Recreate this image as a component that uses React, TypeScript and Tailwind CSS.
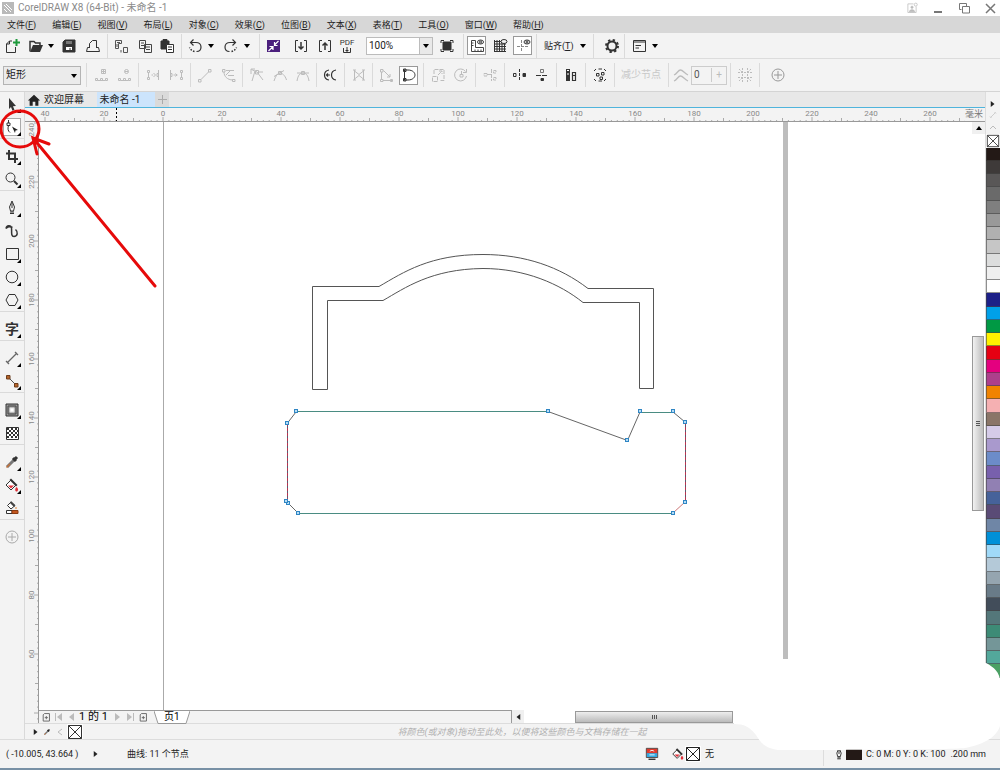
import type { ReactNode } from "react";
import clsx from "clsx";

const menus = [
  ["文件", "F"],
  ["编辑", "E"],
  ["视图", "V"],
  ["布局", "L"],
  ["对象", "C"],
  ["效果", "C"],
  ["位图", "B"],
  ["文本", "X"],
  ["表格", "T"],
  ["工具", "O"],
  ["窗口", "W"],
  ["帮助", "H"],
];

const swatches = [
  "#231916", "#3e3a39", "#595757", "#6a6a6a", "#7f7f7f", "#999999", "#b0b0b0", "#c6c6c6",
  "#dcdddd", "#efefef", "#ffffff", "#1d2088", "#00a0e9", "#009944", "#fff100", "#e60012",
  "#e4007f", "#ad3f8c", "#f08300", "#f5b0b2", "#8a7568", "#d5cbe8", "#a999cd", "#6c8cc9",
  "#7860ad", "#9180b3", "#46629a", "#5a4b76", "#6f86a6", "#0090d8", "#a0d9f8", "#b4c9d8",
  "#95a5b0", "#697b88", "#424d5a", "#54777a", "#3d8b76", "#749698", "#53a89b", "#4ba064",
];

const icons: Record<string, ReactNode> = {
  new: (
    <>
      <path d="M8 3H5.500L2.500 6V14.500H11.500V9M5.500 3V6H2.500" />
      <path d="M12.500 1V8M9 4.500H16" stroke="#1f9a3c" strokeWidth="2" />
    </>
  ),
  open: (
    <>
      <path d="M2 13.500V3.500H6L7.500 5H12V7" strokeWidth="1.500" />
      <path d="M2 14L5 7H15L12 14Z" fill="#333" stroke="none" />
    </>
  ),
  save: (
    <>
      <path d="M2 4L4 2H14V14H2Z" fill="#333" />
      <path d="M5 3H11V6H5Z" fill="#777" stroke="none" />
      <path d="M5 9H11V12H5Z" fill="#fff" stroke="none" />
      <path d="M9 10V12" />
    </>
  ),
  print: <path d="M4.500 10V5.500L7.500 2.500H11.500V10M4.500 9.500H2.500L1.500 13.500H14.500L13.500 9.500H11.500" />,
  cut: (
    <>
      <path d="M2.500 2.500H8.500V5.500H5.500V10.500H2.500ZM4 4.500H7M4 6V9" stroke="#555" />
      <path d="M10.500 9.500H14.500V14.500H10.500ZM8 12V14.500" stroke="#555" />
    </>
  ),
  copy: <path d="M2.500 2.500H8.500V10.500H2.500ZM4 5H7M4 7.500H7M7.500 6.500H14.500V14.500H7.500ZM9 9H13M9 11.500H13" stroke="#444" />,
  paste: (
    <>
      <path d="M2 3H10V11H2ZM4 1.500H8V3H4Z" fill="#333" />
      <path d="M7.500 6.500H14.500V14.500H7.500Z" fill="#fff" />
      <path d="M9 9H13M9 11.500H13" />
    </>
  ),
  undo: (
    <>
      <path d="M6.500 1.500L3.500 4.500L6.500 7.500M4 4.500H9C12 4.500 14 6.500 14 9S12.500 13.500 9.500 13.500" strokeWidth="1.200" />
      <path d="M7.500 13.500C5 13 3.500 11.500 2.500 9.500" strokeWidth="1.500" strokeDasharray="1.500 1.500" />
    </>
  ),
  redo: (
    <>
      <path d="M9.500 1.500L12.500 4.500L9.500 7.500M12 4.500H7C4 4.500 2 6.500 2 9S3.500 13.500 6.500 13.500" strokeWidth="1.200" />
      <path d="M8.500 13.500C11 13 12.500 11.500 13.500 9.500" strokeWidth="1.500" strokeDasharray="1.500 1.500" />
    </>
  ),
  search: (
    <>
      <path d="M2 2H15V14H2Z" fill="#4b1f7d" stroke="none" />
      <path d="M13.500 3L9.500 7M9.500 4V7.500H12.500M3.500 13L7.500 9M4.500 8.500H8V12" stroke="#fff" strokeWidth="1.200" />
    </>
  ),
  importFile: (
    <>
      <path d="M5 2.500H2.500V13.500H5M11 2.500H13.500V13.500H11" />
      <path d="M8 4V11M5.500 8.500L8 11L10.500 8.500" strokeWidth="1.500" />
    </>
  ),
  exportFile: (
    <>
      <path d="M5 2.500H2.500V13.500H5M11 2.500H13.500V13.500H11" />
      <path d="M8 12V5M5.500 7.500L8 5L10.500 7.500" strokeWidth="1.500" />
    </>
  ),
  full: (
    <>
      <path d="M4 4H12V12H4Z" fill="#333" />
      <path d="M2 5V2.500H5M11 2.500H14V5M14 11V13.500H11M5 13.500H2V11" />
    </>
  ),
  rulers: (
    <>
      <path d="M2.500 2.500H6.500V9.500H14.500V13.500H2.500ZM2.500 5H4.500M2.500 7.500H4.500M6 13.500V11.500M9 13.500V11.500M12 13.500V11.500" stroke="#444" />
      <ellipse cx="11.500" cy="4" rx="3" ry="2" />
      <circle cx="11.500" cy="4" r="1" />
    </>
  ),
  grid: (
    <>
      <path d="M2 3.500H14M2 6H14M2 8.500H14M2 11H14M2 13.500H14M2.500 2V14M5 2V14M7.500 2V14M10 5V14M12.500 5V14" stroke="#333" />
      <ellipse cx="12" cy="3.500" rx="3" ry="2" fill="#f3f3f3" />
    </>
  ),
  guides: (
    <>
      <path d="M6.500 2V14M2 8.500H14" stroke="#888" strokeDasharray="3 1" />
      <ellipse cx="12" cy="4" rx="3" ry="2" />
      <circle cx="12" cy="4" r="1" />
    </>
  ),
  gear: (
    <>
      <circle cx="8" cy="8" r="4.500" strokeWidth="2" />
      <circle cx="8" cy="8" r="6" strokeWidth="2" strokeDasharray="2.300 2.412" />
    </>
  ),
  launch: <path d="M2.500 2.500H14.500V13.500H2.500ZM2.500 4H14.500M4.500 7.500H10M4.500 10H8" />,
  nodeAdd: <path d="M8.500 2.500H12.500V6.500H8.500ZM8.500 4.500H12.500M10.500 2.500V6.500M2.500 11.500H4.500V13.500H2.500ZM7.500 11.500H9.500V13.500H7.500ZM12.500 11.500H14.500V13.500H12.500ZM4.500 13.500H12.500" />,
  nodeDel: <path d="M8.500 4.500A2 2 0 1 0 12.500 4.500A2 2 0 1 0 8.500 4.500ZM9 4.500H12M2.500 11.500H4.500V13.500H2.500ZM7.500 11.500H9.500V13.500H7.500ZM12.500 11.500H14.500V13.500H12.500ZM4.500 13.500H12.500" />,
  join: <path d="M2.500 3.500H4.500V5.500H2.500ZM2.500 10.500H4.500V12.500H2.500ZM3.500 5.500V10M6.500 8H8M13.500 3V13M8.500 6L10.500 8L8.500 10M13.500 6.500H12V9.500H13.500" />,
  breakCurve: <path d="M2.500 3V13M2.500 6.500H4V9.500H2.500M9.500 8H5.500M7.500 6.500L9 8L7.500 9.500M12.500 3.500H14.500V5.500H12.500ZM12.500 10.500H14.500V12.500H12.500ZM13.500 5.500V10.500" />,
  toLine: <path d="M1.500 12.500H4V15H1.500ZM11.500 2.500H14V5H11.500ZM4 12.500L11.500 5" />,
  toCurve: <path d="M2.500 2.500H5V5H2.500ZM4 5C4 9 7 13 13 13M6 3.500H14M8 8.500H14M12.500 12.500H15V14.500H12.500ZM10 4L6 8" />,
  cusp: <path d="M2.500 2.500L8 5L14 13M6 4L3 14M6.500 3.500H9.500V7H6.500ZM9 5H14M2 7V2H6" />,
  smooth: <path d="M2 14C4 8 6 6 8 6S13 8 14.500 13M2 9.500L12 3.500M6.500 4.500H9.500V7.500H6.500Z" />,
  symm: <path d="M2 14C3 8 5 6 8 6S13 8 14 14M2 6H14M6.500 4.500H9.500V7.500H6.500Z" />,
  reverse: <path d="M7 3C1 4 1 12 7 13M14 3C8 4 8 12 14 13M4 8H8M6 6.500L4.500 8L6 9.500" strokeWidth="1.200" />,
  extend: <path d="M3.500 3V13M12.500 3V13M3.500 4L8 7.500L12.500 4M3.500 12L8 8.500L12.500 12M2 3H5M2 13H5M11 3H14M11 13H14" />,
  extract: <path d="M2.500 2.500H5V5H2.500ZM3.500 5V12M2.500 12.500H5V14.500H2.500ZM5 13.500H14M5.500 3.500L12 10M9 10H12V7M12.500 12.500H14.500V14.500H12.500Z" />,
  close: <path d="M3.500 2.500V13.500M3.500 3H7C12 3 14 6 14 8S12 13 7 13H3.500M2.500 2H5V4.500H2.500ZM2.500 11.500H5V14H2.500Z" />,
  stretch: <path d="M2.500 9.500H7.500V14.500H2.500ZM4 7V2.500H14V13.500H10M8 8L12 4M9 4H12V7" strokeDasharray="4 1" />,
  rotate: <path d="M12.500 4.500A6 6 0 1 0 13.500 9M13.500 2V5.500H10M7 7.500H10V10H7ZM8.500 4V7" />,
  align: <path d="M9.500 2V14M2 6.500H5V9H2ZM5 7.500H9.500M11.500 3.500H14V6H11.500ZM11.500 10.500H14V13H11.500Z" strokeDasharray="4 1" />,
  flipH: (
    <>
      <path d="M8.500 2V14" strokeDasharray="3 1" />
      <path d="M2.500 6.500H5V9.500H2.500Z" />
      <path d="M12 6.500H14.500V9.500H12Z" fill="#333" />
    </>
  ),
  flipV: (
    <>
      <path d="M2 8.500H14" strokeDasharray="5 1" />
      <path d="M6.500 2.500H9.500V5.500H6.500Z" stroke="#777" />
      <path d="M7 11.500H9.500V13.500H7Z" fill="#333" />
    </>
  ),
  elastic: (
    <>
      <path d="M3 2H7V14H3Z" fill="#333" stroke="none" />
      <path d="M4 3.500H6M4 7H6" stroke="#fff" />
      <path d="M9.500 5.500H12.500V13.500H9.500ZM9.500 8.500H12.500" strokeWidth="1.200" />
    </>
  ),
  selectAll: <path d="M2 4L4 2M12 2L14 4M2 12L4 14M14 12L12 14M6.500 2H10M6.500 14H10M4.500 6.500H7V9H4.500ZM9.500 5.500H12V8H9.500ZM8 10H10.500V12.500H8Z" />,
  curveSmooth: <path d="M1 8C4 7 5 3 7.500 3S11 6 15 8M1 14C4 13 5 9 7.500 9S11 12 15 14" strokeWidth="1.300" />,
  box: <path d="M5.500 1V15M10.500 1V15M1 5.500H15M1 10.500H15M2 2L5 5M14 2L11 5M2 14L5 11M14 14L11 11" strokeDasharray="2 1" />,
  plus: (
    <>
      <circle cx="8" cy="8" r="6" />
      <path d="M8 4V12M4 8H12" />
    </>
  ),
  pick: <path d="M5 2L12 10L9 10.200L10.500 14L8.500 14.700L7 11L5 13Z" fill="#333" stroke="none" />,
  shape: (
    <>
      <path d="M4.500 1V4M3 4H6V6.500H3ZM4.500 6.500C3.500 10 4 12 6 13.500" />
      <path d="M8 7.500L14 11L11.500 11.500L11 14Z" fill="#222" stroke="none" />
    </>
  ),
  crop: <path d="M5 2V11H14M2 5.500H11V15" strokeWidth="2" />,
  zoom: (
    <>
      <circle cx="6.500" cy="6.500" r="4.500" />
      <path d="M10 10L13.500 13.500" strokeWidth="2" />
    </>
  ),
  pen: <path d="M8 1L5.500 7L6.500 11H9.500L10.500 7ZM8 3V8M6 13.500H10M7 11V13M9 11V13" />,
  artistic: <path d="M2 5.500C2.500 2 7 2 7.500 5S6.500 13.500 10 13.500S14.500 9 11.500 6.500M2 5.500C4 3.500 6.500 3.500 8.500 4.500" strokeWidth="1.500" />,
  rect: <path d="M2.500 2.500H14.500V13.500H2.500Z" />,
  ellipse: <circle cx="8" cy="8" r="5.800" />,
  polygon: <path d="M5 2.500H11L14 8L11 13.500H5L2 8Z" />,
  dimension: <path d="M3 13L13 3M2 11L5 14M11 2L14 5" stroke="#666" strokeWidth="1.300" />,
  connector: (
    <>
      <path d="M4 4L12 12" stroke="#555" />
      <path d="M2.500 2.500H6V6H2.500ZM10.500 10.500H14V14H10.500Z" fill="#b5652a" stroke="#6d3c1c" />
    </>
  ),
  shadow: (
    <>
      <path d="M2 2H14V14H2Z" fill="#999" />
      <path d="M4 4H12V12H4Z" stroke="#444" />
      <path d="M6 6H10V10H6Z" fill="#fff" stroke="#ddd" />
    </>
  ),
  transparency: (
    <>
      <path d="M2.500 2.500H14.500V14.500H2.500Z" fill="#fff" />
      <path d="M3 4H14M3 8H14M3 12H14" strokeWidth="2" strokeDasharray="2 2" />
      <path d="M5 6H14M5 10H14" strokeWidth="2" strokeDasharray="2 2" />
    </>
  ),
  eyedropper: (
    <>
      <path d="M3 13L10 6" stroke="#777" strokeWidth="3" />
      <path d="M2.500 13.500L6 10" stroke="#c5723a" strokeWidth="1.500" />
      <path d="M9 4L12 7M10 6L13 3" strokeWidth="3" />
    </>
  ),
  fill: (
    <>
      <path d="M7 3L2 8L7 13L12 8Z" fill="#fff" />
      <path d="M7 1.500L13.500 8L12 9.500L5.500 3Z" fill="#333" stroke="none" />
      <path d="M4 8.500H10L7 11.500Z" fill="#e0313a" stroke="none" />
      <path d="M12.500 10C15 12 14 14.500 12.500 14.500S10.500 12 12.500 10Z" fill="#e0313a" stroke="none" />
    </>
  ),
  smartFill: (
    <>
      <path d="M7 2L3.500 5.500L7 9L11 5.500Z" fill="#fff" />
      <path d="M7 1L11.500 5.500L10 7L6 3Z" fill="#444" stroke="none" />
      <path d="M12 7V9" stroke="#e08030" />
      <path d="M2.500 10.500H8V13.500H2.500Z" fill="#fff" />
      <path d="M8 10.500H14V13.500H8Z" fill="#c4571f" stroke="#8a3b12" />
    </>
  ),
  monitor: (
    <>
      <path d="M1.500 1.500H14.500V12H1.500Z" fill="#e0392c" stroke="#444" />
      <path d="M2 7H14V11.500H2Z" fill="#35a9e0" stroke="none" />
      <path d="M5.500 5C7 3.500 9 3.500 10.500 5M5 9H11" stroke="#fff" />
      <path d="M4 14H12" strokeWidth="1.500" />
    </>
  ),
  none: <path d="M1.500 1.500H14.500V14.500H1.500ZM1.500 1.500L14.500 14.500M14.500 1.500L1.500 14.500" />,
  user: (
    <>
      <path d="M10 2.500H2.500V14H13.500V6" />
      <path d="M4.500 13C4.500 9.500 11.500 9.500 11.500 13Z" fill="currentColor" />
      <circle cx="8" cy="7" r="1.500" fill="currentColor" />
      <circle cx="13" cy="3.500" r="2" />
    </>
  ),
  home: <path d="M1 8.500L8 2L15 8.500H13V14.500H9.500V10H6.500V14.500H3V8.500Z" fill="#222" stroke="none" />,
  pageAdd: <path d="M5.500 2.500H13.500V14.500H3.500V4.500ZM6 9H11M8.500 6.500V11.500" stroke="#666" strokeWidth="1.500" />,
};

function Icon({ name, className = "size-4" }: { name: string; className?: string }) {
  return (
    <svg viewBox="0 0 16 16" fill="none" stroke="currentColor" className={clsx("shrink-0", className)} aria-hidden="true">
      {icons[name]}
    </svg>
  );
}

function Caret({ className }: { className?: string }) {
  return (
    <svg viewBox="0 0 6 4" className={clsx("h-1 w-1.5 shrink-0 fill-black", className)} aria-hidden="true">
      <path d="M0 0H6L3 4Z" />
    </svg>
  );
}

function Triangle({ className = "size-2", left, bar }: { className?: string; left?: boolean; bar?: boolean }) {
  return (
    <svg viewBox="0 0 8 8" className={clsx("shrink-0", left && "rotate-180", className)} aria-hidden="true">
      <path d="M1 0L6 4L1 8Z" fill="currentColor" />
      {bar && <path d="M7.500 0V8" stroke="currentColor" />}
    </svg>
  );
}

function Tool({ icon, label, width = "w-[23px]", active, muted }: { icon: string; label: string; width?: string; active?: boolean; muted?: boolean }) {
  return (
    <button aria-label={label} className={clsx("flex h-5 shrink-0 items-center justify-center", width, muted ? "text-[#bcbcbc]" : "text-[#333]")}>
      <span className={clsx("flex size-[19px] shrink-0 items-center justify-center", active && "border border-[#999] bg-white")}>
        <Icon name={icon} />
      </span>
    </button>
  );
}

function DropButton({ label, width = "w-4" }: { label: string; width?: string }) {
  return (
    <button aria-label={label} className={clsx("flex h-5 shrink-0 items-center justify-center", width)}>
      <Caret />
    </button>
  );
}

function Sep({ width = "w-1.5" }: { width?: string }) {
  return (
    <span className={clsx("flex h-6 shrink-0 justify-center", width)}>
      <span className="w-px bg-[#dadada]" />
    </span>
  );
}

function TitleBar() {
  return (
    <header className="flex h-4 items-center bg-white pr-1 pl-0.5 text-[#8a8a8a]">
      <svg viewBox="0 0 12 12" className="mr-1 size-3" aria-hidden="true">
        <path d="M0 0H12V12H0Z" fill="#b9b9b9" />
        <path d="M2 3L9 10M4 2L10 8M2 7L5 10" stroke="#fff" />
      </svg>
      <h1>CorelDRAW X8 (64-Bit) - 未命名 -1</h1>
      <div className="ml-auto flex items-center gap-3.5 text-[#777]">
        <button aria-label="账户" className="text-[#bbb]">
          <Icon name="user" className="size-3" />
        </button>
        <button aria-label="最小化">
          <svg viewBox="0 0 12 12" className="size-3"><path d="M2 10H10" stroke="currentColor" strokeWidth="2" /></svg>
        </button>
        <button aria-label="还原">
          <svg viewBox="0 0 12 12" className="size-3" fill="none" stroke="currentColor"><path d="M3.500 7.500H1.500V1.500H8.500V4M4.500 4.500H11.500V11H4.500Z" /></svg>
        </button>
        <button aria-label="关闭">
          <svg viewBox="0 0 12 12" className="size-3"><path d="M2 2L11 11M11 2L2 11" stroke="currentColor" strokeWidth="1.500" /></svg>
        </button>
      </div>
    </header>
  );
}

function MenuBar() {
  return (
    <nav className="flex h-[17px] items-center gap-4 bg-[#d7d7d7] px-[7px] text-[9px]">
      {menus.map(([name, key]) => (
        <button key={name}>
          {name}(<u>{key}</u>)
        </button>
      ))}
    </nav>
  );
}

function StandardBar() {
  return (
    <div className="flex h-[26px] items-center border-b border-[#dcdcdc]">
      <Tool icon="new" label="新建" width="w-6" />
      <Tool icon="open" label="打开" />
      <DropButton label="最近打开" width="w-2" />
      <Tool icon="save" label="保存" width="w-7" />
      <Tool icon="print" label="打印" width="w-5" />
      <Sep width="w-2" />
      <Tool icon="cut" label="剪切" width="w-5" />
      <Tool icon="copy" label="复制" width="w-7" />
      <Tool icon="paste" label="粘贴" width="w-4" />
      <Sep width="w-3" />
      <Tool icon="undo" label="撤消" width="w-4" />
      <DropButton label="撤消列表" />
      <Tool icon="redo" label="重做" width="w-6" />
      <DropButton label="重做列表" width="w-2" />
      <Sep width="w-4" />
      <Tool icon="search" label="搜索内容" width="w-3" />
      <span className="w-2.5" />
      <Tool icon="importFile" label="导入" width="w-6" />
      <Tool icon="exportFile" label="导出" />
      <button aria-label="发布为 PDF" className="flex w-[22px] shrink-0 flex-col items-center text-[#333]">
        <span className="text-[8px] leading-[8px]">PDF</span>
        <svg viewBox="0 0 8 6" className="h-1.5 w-2" fill="none" stroke="currentColor" aria-hidden="true">
          <path d="M.5 1V5.500H7.500V1M2.500 3.500H5.500M4 0V5" />
        </svg>
      </button>
      <span className="relative ml-2 flex h-[18px] w-[67px] shrink-0 border border-[#bcbcbc] bg-white">
        <select aria-label="缩放级别" className="w-full appearance-none pl-0.5 outline-none">
          <option>100%</option>
        </select>
        <span className="pointer-events-none absolute inset-y-0 right-0 flex w-[13px] items-center justify-center border-l border-[#bcbcbc] bg-[#e9e9e9]">
          <Caret />
        </span>
      </span>
      <Tool icon="full" label="全屏预览" width="w-7" />
      <Sep width="w-1" />
      <Tool icon="rulers" label="显示标尺" active />
      <Tool icon="grid" label="显示网格" />
      <Tool icon="guides" label="显示辅助线" active />
      <Sep width="w-1" />
      <button className="ml-1.5 flex items-center gap-1.5">
        <span className="text-[9px]">贴齐(<u>T</u>)</span>
        <Caret />
      </button>
      <Sep width="w-4" />
      <Tool icon="gear" label="选项" width="w-5" />
      <Sep />
      <Tool icon="launch" label="应用程序启动器" />
      <DropButton label="启动器列表" width="w-2" />
    </div>
  );
}

function PropertyBar() {
  return (
    <div className="flex h-[33px] items-center border-b border-[#d4d4d4] pl-[3px]">
      <span className="relative flex h-[19px] w-[78px] shrink-0 border border-[#b4b4b4] bg-[#ebebeb]">
        <select aria-label="选取范围模式" className="w-full appearance-none pl-0.5 outline-none">
          <option>矩形</option>
        </select>
        <Caret className="pointer-events-none absolute top-[7px] right-[3px]" />
      </span>
      <span className="w-0.5" />
      <Sep />
      <Tool icon="nodeAdd" label="添加节点" muted />
      <Tool icon="nodeDel" label="删除节点" muted />
      <Sep />
      <Tool icon="join" label="连接两个节点" muted />
      <Tool icon="breakCurve" label="断开曲线" muted />
      <Sep />
      <Tool icon="toLine" label="转换为线条" muted />
      <Tool icon="toCurve" label="转换为曲线" muted />
      <Sep />
      <Tool icon="cusp" label="尖突节点" muted />
      <Tool icon="smooth" label="平滑节点" muted />
      <Tool icon="symm" label="对称节点" muted />
      <Sep width="w-1" />
      <Tool icon="reverse" label="反转方向" />
      <Sep />
      <Tool icon="extend" label="延长曲线使之闭合" muted />
      <Sep width="w-1" />
      <Tool icon="extract" label="提取子路径" muted />
      <Tool icon="close" label="闭合曲线" active />
      <Sep />
      <Tool icon="stretch" label="延展与缩放节点" muted />
      <Tool icon="rotate" label="旋转与倾斜节点" muted />
      <Sep />
      <Tool icon="align" label="对齐节点" muted />
      <Sep />
      <Tool icon="flipH" label="水平反射节点" />
      <Tool icon="flipV" label="垂直反射节点" />
      <Sep />
      <Tool icon="elastic" label="弹性模式" />
      <Sep />
      <Tool icon="selectAll" label="选择所有节点" />
      <Sep />
      <button className="px-1 text-[#c8c8c8]">减少节点</button>
      <Sep />
      <Tool icon="curveSmooth" label="曲线平滑度" width="w-5" muted />
      <span className="flex h-[19px] w-9 shrink-0 items-center border border-[#ccc] text-[#555]">
        <input aria-label="平滑度" defaultValue="0" className="w-5 min-w-0 border-r border-[#ccc] pl-0.5 outline-none" />
        <span className="flex-1 text-center text-[#bbb]">+</span>
      </span>
      <Sep />
      <Tool icon="box" label="边框" muted />
      <Sep />
      <button aria-label="自定义" className="ml-1.5 flex size-5 items-center justify-center text-[#999]">
        <Icon name="plus" />
      </button>
    </div>
  );
}

const toolGroups = [
  [["pick", "选择"], ["shape", "形状"]],
  [["crop", "裁剪"], ["zoom", "缩放"]],
  [["pen", "手绘"], ["artistic", "艺术笔"], ["rect", "矩形"], ["ellipse", "椭圆形"], ["polygon", "多边形"]],
  [["text", "文本"]],
  [["dimension", "平行度量"], ["connector", "连接器"]],
  [["shadow", "阴影"], ["transparency", "透明度"]],
  [["eyedropper", "颜色滴管"], ["fill", "交互式填充"], ["smartFill", "智能填充"]],
];
const noFlyout = ["artistic", "transparency", "smartFill"];

function Toolbox() {
  return (
    <aside className="flex w-[25px] shrink-0 flex-col border-r border-[#d9d9d9]">
      {toolGroups.map((group, i) => (
        <div key={i} className="mb-[5px] border-b border-[#dadada]">
          {group.map(([icon, label]) => (
            <button key={icon} aria-label={`${label}工具`} className="relative flex h-[23px] w-full items-center justify-center text-[#333]">
              {icon === "text" ? (
                <span className="text-[14px] leading-4 font-bold">字</span>
              ) : (
                <span className={clsx("flex size-[18px] items-center justify-center", icon === "shape" && "border border-[#aaa] bg-white")}>
                  <Icon name={icon} />
                </span>
              )}
              {!noFlyout.includes(icon) && (
                <svg viewBox="0 0 4 4" className="absolute right-[3px] bottom-0.5 size-1 fill-black" aria-hidden="true">
                  <path d="M4 0V4H0Z" />
                </svg>
              )}
            </button>
          ))}
        </div>
      ))}
      <button aria-label="自定义工具箱" className="flex h-6 items-center justify-center text-[#aaa]">
        <Icon name="plus" />
      </button>
    </aside>
  );
}

// 59px on screen for every 20mm on the rulers
const STEP = 59;

function RulerX() {
  const labels = Array.from({ length: 30 }, (_, i) => i - 2);
  return (
    <div className="flex h-3.5 border-b border-[#999]">
      <svg className="h-[13px] min-w-0 flex-1 text-[8px]" aria-hidden="true">
        {labels.map((n) => {
          const x = 138 + n * STEP;
          return (
            <g key={n}>
              {Array.from({ length: 10 }, (_, k) => (
                <path key={k} d={`M${x + k * 5.9} ${k === 0 ? 9 : k === 5 ? 10 : 12}V13`} stroke="#aaa" />
              ))}
              {n < 14 && <text x={x} y="8" textAnchor="middle" fill="#888">{Math.abs(n * 20)}</text>}
            </g>
          );
        })}
        <path d="M91.500 0V13" stroke="#000" strokeDasharray="2 2" />
      </svg>
      <span className="w-5 text-[9px] leading-[13px] text-[#777]">毫米</span>
    </div>
  );
}

function RulerY() {
  const labels = Array.from({ length: 20 }, (_, i) => i);
  return (
    <div className="relative w-3.5 shrink-0 overflow-hidden border-r border-[#999]">
      <svg className="absolute inset-0 h-full w-full text-[8px]" aria-hidden="true">
        {labels.map((n) => {
          const y = 1 + n * STEP;
          return (
            <g key={n}>
              {Array.from({ length: 10 }, (_, k) => (
                <path key={k} d={`M${k === 0 ? 9 : k === 5 ? 10 : 12} ${y + k * 5.9}H13`} stroke="#aaa" />
              ))}
              {n < 10 && <text x={-y} y="9" textAnchor={n === 0 ? "end" : "middle"} transform="rotate(-90)" fill="#888">{Math.abs(240 - n * 20)}</text>}
            </g>
          );
        })}
      </svg>
    </div>
  );
}

const nodes = [
  [257, 289], [509, 289], [588, 318], [601, 289], [634, 289], [646, 300],
  [646, 380], [634, 391], [259, 391], [249, 381], [248, 301], [247, 379],
];

function Drawing() {
  return (
    <svg className="h-full w-full" fill="none" aria-label="绘图页面">
      <path d="M124.500 0V2000" stroke="#aaa" />
      <path d="M744 0H749V538H744Z" fill="#bdbdbd" />
      <g stroke="#555">
        <path d="M273.500 267.500V164.500H340C365 150 391 132.500 444 132.500C486 132.500 521 145 549 166.500H614.500V266.500H600.500V180.500H544C521 162 486 146.500 444 146.500C392 147 366 166 344 178.500H288.500V267.500Z" />
        <path d="M257 289.500H509M601 290.500H634M259 391.500H634" stroke="#4a8c82" />
        <path d="M509 289.500L588.500 318.500L601 290M257 290L248.500 301M634 290L646 300M248 380L259 391" stroke="#666" />
        <path d="M634 391L646 380" stroke="#c77" />
        <path d="M248.500 301V380M646.500 300V380" stroke="#5a5a6e" />
        <path d="M248.500 301V380M646.500 300V380" stroke="#b8324f" strokeDasharray="3 2" />
      </g>
      {nodes.map(([x, y], i) => (
        <rect key={i} x={x - 1.5} y={y - 1.5} width="3" height="3" fill="#b5dcf5" stroke="#2f86c4" />
      ))}
    </svg>
  );
}

function PageNav() {
  return (
    <div className="flex h-[13px] items-center">
      <div className="flex h-full w-1/2 items-center border-t border-r border-[#999] bg-[#f3f3f3] text-[#bbb]">
        <button aria-label="在前面添加页" className="ml-0.5"><Icon name="pageAdd" className="size-2.5" /></button>
        <button aria-label="第一页" className="ml-1"><Triangle left bar /></button>
        <button aria-label="上一页" className="ml-1"><Triangle left /></button>
        <span className="mx-1 text-[11px] leading-3 text-black">1 的 1</span>
        <button aria-label="下一页" className="ml-0.5"><Triangle /></button>
        <button aria-label="最后一页" className="ml-1"><Triangle bar /></button>
        <button aria-label="在后面添加页" className="ml-1"><Icon name="pageAdd" className="size-2.5" /></button>
        <button className="relative ml-1.5 h-[13px] w-9 text-black">
          <svg viewBox="0 0 36 13" className="absolute inset-0 h-[13px] w-9" aria-hidden="true">
            <path d="M0 0L4 12.500H32L36 0" fill="#fff" stroke="#999" />
          </svg>
          <span className="relative block leading-[12px]">页1</span>
        </button>
      </div>
      <button aria-label="向左滚动" className="flex h-full w-3 items-center justify-center bg-[#f0f0f0]">
        <Triangle left className="size-1.5" />
      </button>
      <div className="ml-[51px] flex h-3 w-[158px] items-center justify-center gap-px border border-[#999] bg-gradient-to-b from-[#eee] to-[#bbb]">
        <i className="h-1 w-px bg-[#555]" />
        <i className="h-1 w-px bg-[#555]" />
        <i className="h-1 w-px bg-[#555]" />
      </div>
    </div>
  );
}

function DocumentPalette() {
  return (
    <div className="flex h-4 items-center border-t border-[#dcdcdc] pl-2">
      <Triangle className="size-1.5" />
      <button aria-label="滴管" className="ml-1"><Icon name="eyedropper" className="size-2" /></button>
      <svg viewBox="0 0 6 8" className="ml-1.5 h-2 w-1.5" fill="none" stroke="#bbb" aria-hidden="true"><path d="M5 1L1 4L5 7" /></svg>
      <button aria-label="无颜色" className="ml-1 bg-white text-[#333]"><Icon name="none" /></button>
      <p className="flex-1 pr-6 text-center text-[9px] text-[#b0b0b0] italic">将颜色(或对象)拖动至此处，以便将这些颜色与文档存储在一起</p>
    </div>
  );
}

function Workspace() {
  return (
    <main className="flex min-w-0 flex-1 flex-col">
      <div className="flex h-4 items-stretch border-b border-[#4fb4dc] bg-[#e8e8e8]">
        <button className="flex w-[72px] items-center gap-[3px] pl-0.5">
          <Icon name="home" className="size-3.5" />
          欢迎屏幕
        </button>
        <button className="w-[58px] bg-[#cce4fc] pr-3">未命名 -1</button>
        <button aria-label="新建文档" className="flex w-3.5 items-center justify-center bg-[#dadada]">
          <svg viewBox="0 0 9 9" className="size-[9px]" stroke="#aaa"><path d="M4.500 0V9M0 4.500H9" /></svg>
        </button>
      </div>
      <RulerX />
      <div className="flex flex-1">
        <RulerY />
        <div className="flex min-w-0 flex-1 flex-col bg-white">
          <div className="flex flex-1">
            <div className="relative min-w-0 flex-1">
              <div className="absolute inset-0"><Drawing /></div>
            </div>
            <div className="flex w-[13px] flex-col">
              <button aria-label="向上滚动" className="flex h-3 items-center justify-center bg-[#f0f0f0]">
                <Caret className="rotate-180" />
              </button>
              <div className="mt-[202px] flex h-[175px] w-3 flex-col items-center justify-center gap-px border border-[#999] bg-gradient-to-r from-[#f2f2f2] to-[#bdbdbd]">
                <i className="h-px w-1 bg-[#555]" />
                <i className="h-px w-1 bg-[#555]" />
                <i className="h-px w-1 bg-[#555]" />
              </div>
            </div>
          </div>
          <PageNav />
        </div>
      </div>
      <DocumentPalette />
    </main>
  );
}

function ColorPalette() {
  return (
    <aside className="flex w-[15px] shrink-0 flex-col items-center border-l border-[#ddd] pt-2">
      <span className="flex h-2 items-center"><Triangle className="size-1.5" /></span>
      <span className="flex h-3.5 items-center text-[#bbb]"><Icon name="dimension" className="size-2 opacity-40" /></span>
      <svg viewBox="0 0 8 12" className="h-3 w-2" fill="none" stroke="#bbb"><path d="M1 7L4 4L7 7" /></svg>
      <ul className="w-full [&>li:nth-child(4n+1)]:h-3.5">
        <li className="bg-white"><Icon name="none" className="size-3.5 text-[#333]" /></li>
        {swatches.map((color) => (
          <li key={color} className="h-[13px] border-b border-l border-[#44444499]" style={{ backgroundColor: color }} />
        ))}
      </ul>
    </aside>
  );
}

function StatusBar() {
  return (
    <footer className="flex h-[29px] items-center border-t border-[#dcdcdc] px-1.5 text-[9px]">
      <span className="w-[87px]">( -10.005, 43.664 )</span>
      <Triangle className="size-1.5" />
      <span className="ml-7">曲线: 11 个节点</span>
      <div className="ml-auto flex items-center">
        <Icon name="monitor" className="size-3.5" />
        <Icon name="fill" className="ml-3 size-3.5" />
        <span className="bg-white"><Icon name="none" /></span>
        <span className="ml-1 w-[118px]">无</span>
        <span className="h-6 w-px bg-[#ddd]" />
        <Icon name="pen" className="ml-2 size-3.5" />
        <span className="h-3 w-4 bg-[#231916]" />
        <span className="ml-1 w-[84px] whitespace-nowrap">C: 0 M: 0 Y: 0 K: 100</span>
        <span className="w-9 text-right whitespace-nowrap">.200 mm</span>
      </div>
      <span className="w-2" />
    </footer>
  );
}

export default function App() {
  return (
    <div className="relative flex min-h-screen flex-col overflow-hidden bg-[#f3f3f3] font-['Roboto','Noto_Sans_CJK_SC',sans-serif] text-[10px] leading-[14px] text-[#222]">
      <TitleBar />
      <MenuBar />
      <StandardBar />
      <PropertyBar />
      <div className="flex flex-1">
        <Toolbox />
        <Workspace />
        <ColorPalette />
      </div>
      <StatusBar />
      <div className="h-0.5 bg-[#7890a5]" />

      <svg viewBox="0 0 270 111" className="pointer-events-none absolute right-0 bottom-0 h-[111px] w-[270px] fill-white" aria-hidden="true">
        <path d="M30 0H242V4H256C264 8 270 14 270 22V67C266 80 250 86 235 89C225 91 60 91 48 91C32 88 30 82 26 76C20 68 14 65 4 65V0Z" />
      </svg>
      <svg viewBox="0 0 160 190" className="pointer-events-none absolute top-[100px] left-0 h-[190px] w-[160px]" fill="none" stroke="#e60a0a" strokeWidth="3" strokeLinecap="round" aria-hidden="true">
        <ellipse cx="20" cy="29" rx="19" ry="18" />
        <path d="M155 186L33 38M37 54L33 38L49 44" />
      </svg>
    </div>
  );
}
